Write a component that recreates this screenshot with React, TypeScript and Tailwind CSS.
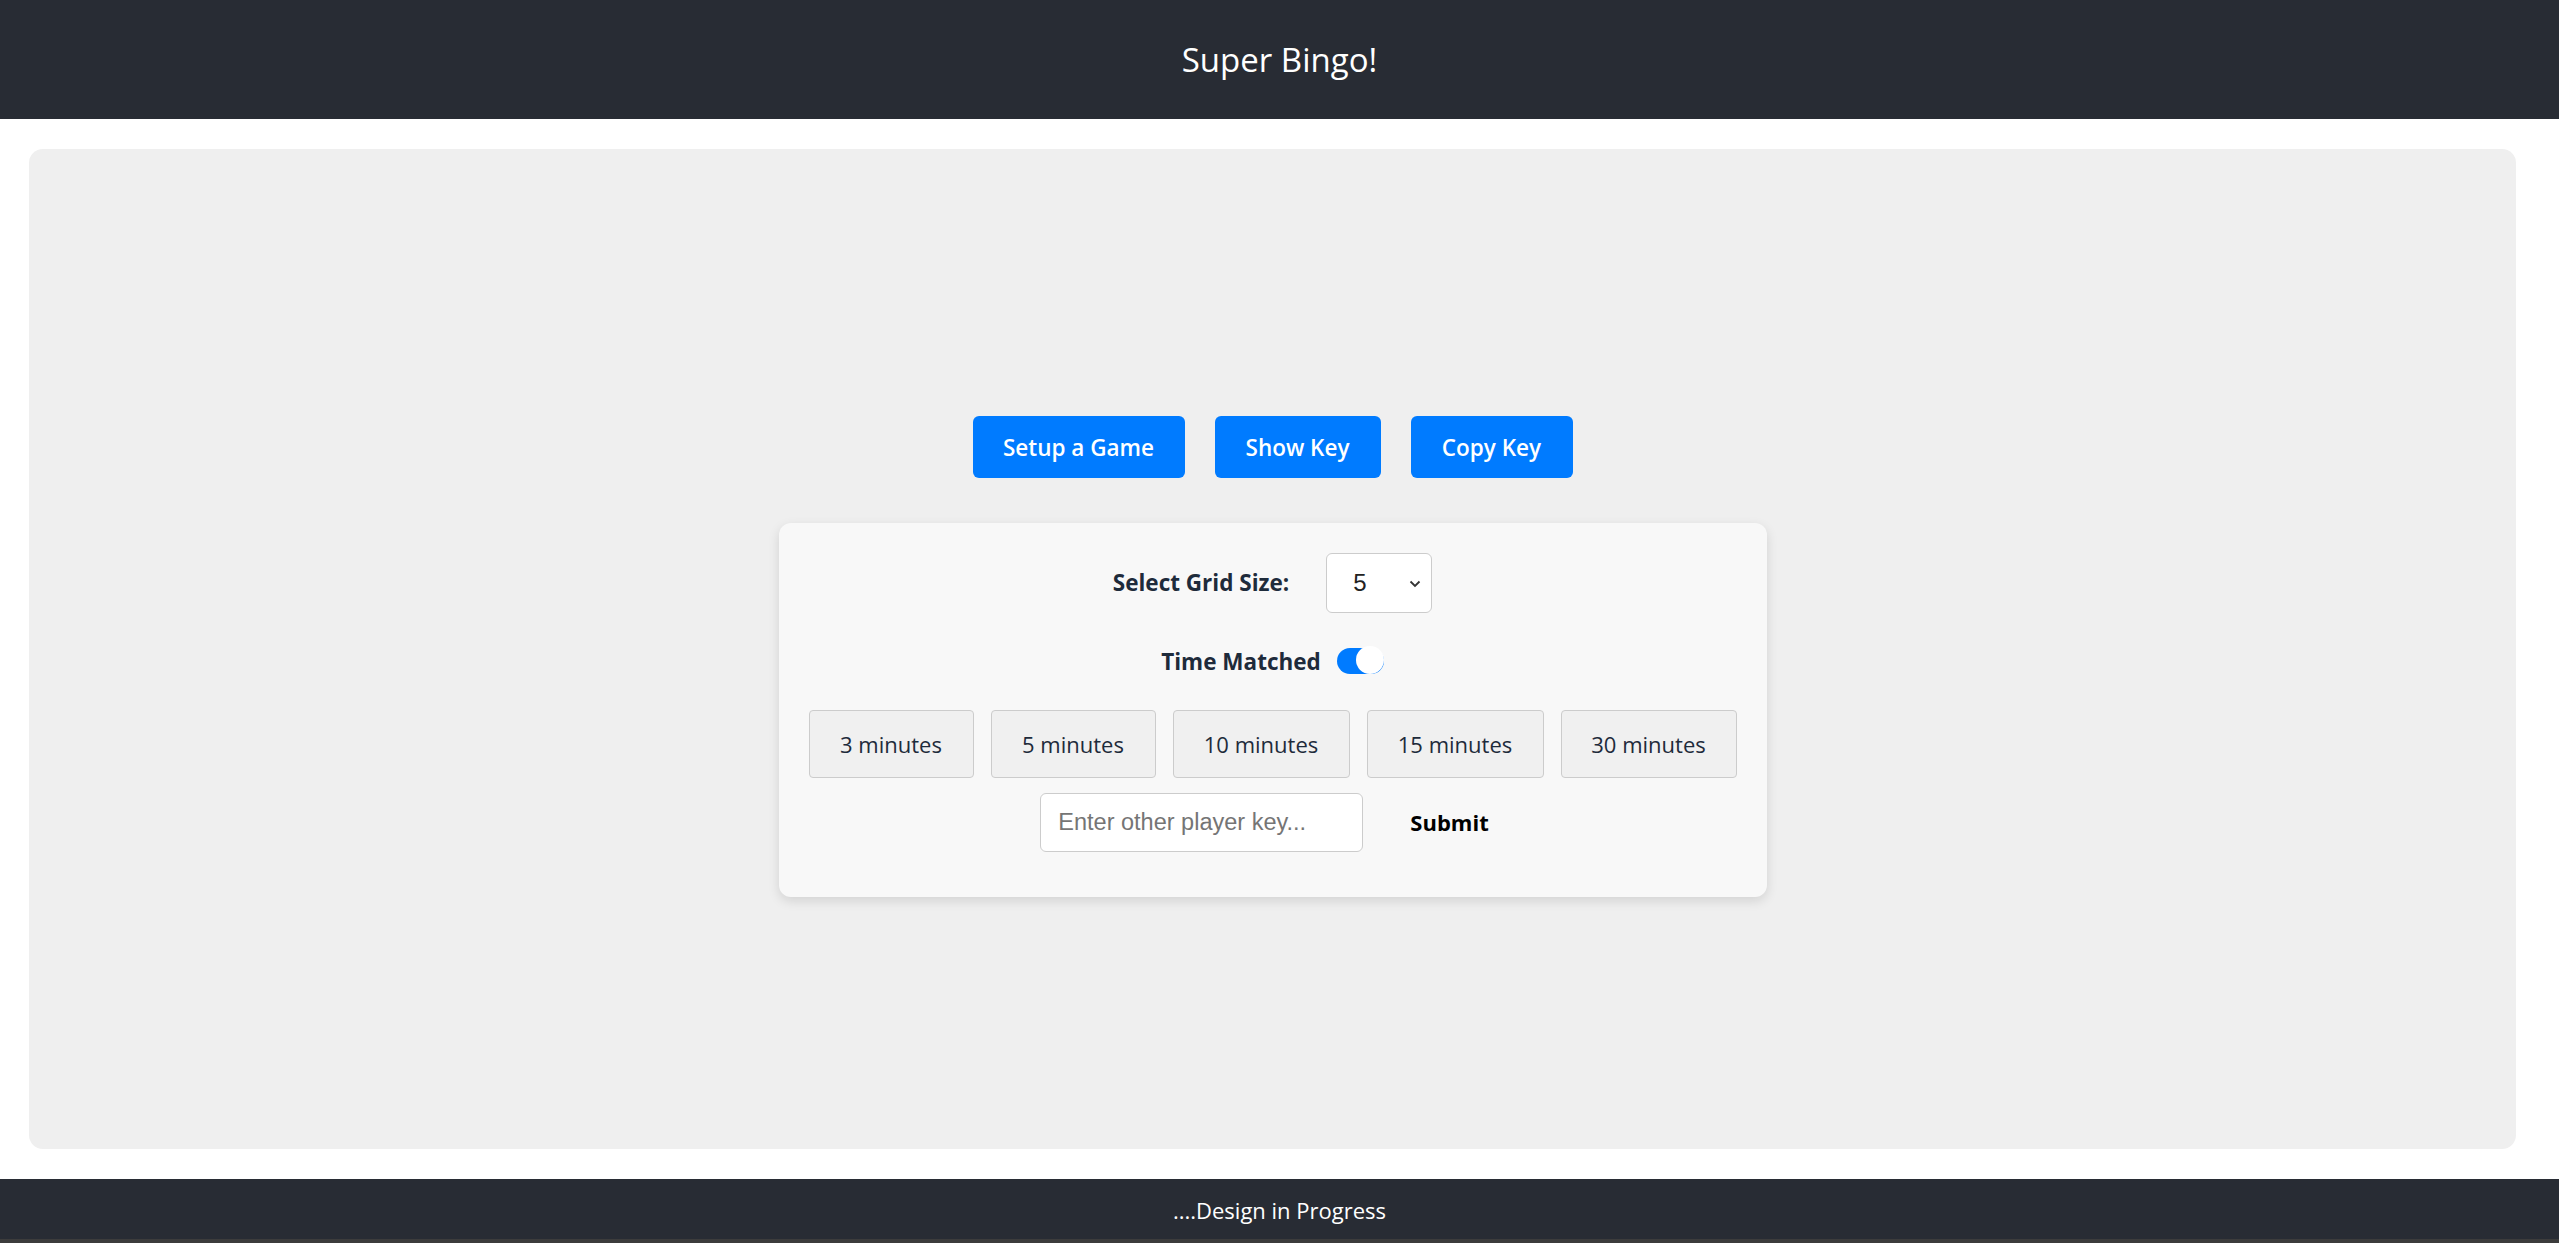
import React, { useState } from "react";

const sans = { fontFamily: '"Open Sans", "Noto Sans", sans-serif' };

export default function App() {
  const [on, setOn] = useState(true);
  const minutes = [
    { label: "3 minutes", w: "w-[165px]" },
    { label: "5 minutes", w: "w-[165px]" },
    { label: "10 minutes", w: "w-[177px]" },
    { label: "15 minutes", w: "w-[177px]" },
    { label: "30 minutes", w: "w-[176px]" },
  ];
  return (
    <div className="flex min-h-[1243px] flex-col bg-white" style={sans}>
      <header className="flex h-[119px] items-center justify-center bg-[#282c34]">
        <h1 className="text-[33px] font-normal text-white">Super Bingo!</h1>
      </header>

      <main className="mt-[30px] ml-[29px] mr-[43px] flex h-[1000px] flex-col items-center justify-center rounded-[14px] bg-[#efefef] pt-[14px]">
        <div className="flex gap-[30px]">
          <button className="h-[62px] w-[212px] rounded-[6px] bg-[#007bff] pt-[2px] text-[22.5px] font-semibold text-white">
            Setup a Game
          </button>
          <button className="h-[62px] w-[166px] rounded-[6px] bg-[#007bff] pt-[2px] text-[22.5px] font-semibold text-white">
            Show Key
          </button>
          <button className="h-[62px] w-[162px] rounded-[6px] bg-[#007bff] pt-[2px] text-[22.5px] font-semibold text-white">
            Copy Key
          </button>
        </div>

        <div className="mt-[45px] flex w-[988px] flex-col items-center rounded-[12px] bg-[#f8f8f8] px-[31px] pt-[30px] pb-[45px] shadow-[0_4px_12px_rgba(0,0,0,0.12)]">
          <div className="flex h-[60px] items-center gap-[37px]">
            <span className="text-[22.5px] font-bold text-[#1e2b3b]">Select Grid Size:</span>
            <div className="relative flex h-[60px] w-[106px] items-center rounded-[6px] border border-[#cccccc] bg-white">
              <span
                className="pl-[26px] text-[24px] text-[#222]"
                style={{ fontFamily: '"Liberation Sans", Arial, sans-serif' }}
              >
                5
              </span>
              <svg
                className="absolute right-[10px] top-[26px]"
                width="12"
                height="8"
                viewBox="0 0 12 8"
                fill="none"
              >
                <path d="M1.5 1.5 L6 6 L10.5 1.5" stroke="#333" strokeWidth="1.8" />
              </svg>
            </div>
          </div>

          <div className="mt-[35px] flex h-[26px] items-center gap-[16px]">
            <span className="pt-[3px] text-[22.5px] font-bold text-[#1e2b3b]">Time Matched</span>
            <button
              onClick={() => setOn(!on)}
              className="relative h-[26px] w-[47px] rounded-full bg-[#007bff]"
            >
              <span className="absolute right-0 top-[-2px] h-[28px] w-[28px] rounded-full bg-white" />
            </button>
          </div>

          <div className="mt-[36px] flex gap-[17px]">
            {minutes.map((m) => (
              <button
                key={m.label}
                className={`h-[68px] ${m.w} rounded-[4px] border border-[#cccccc] bg-[#f0f0f0] pt-[2px] text-[22px] text-[#1e2b3b]`}
              >
                {m.label}
              </button>
            ))}
          </div>

          <div className="mt-[15px] flex items-center">
            <input
              placeholder="Enter other player key..."
              className="h-[59px] w-[323px] rounded-[6px] border border-[#cccccc] bg-white px-[17px] text-[23.5px] text-[#222] placeholder:text-[#757575] outline-none"
              style={{ fontFamily: '"Liberation Sans", Arial, sans-serif' }}
            />
            <button className="ml-[31px] px-[16px] text-[22px] font-bold text-black">Submit</button>
          </div>
        </div>
      </main>

      <footer className="mt-[30px] flex h-[60px] items-center justify-center bg-[#282c34]">
        <span className="pt-[2px] text-[22px] text-white">....Design in Progress</span>
      </footer>
      <div className="h-[4px] bg-[#3c3c3c]" />
    </div>
  );
}
